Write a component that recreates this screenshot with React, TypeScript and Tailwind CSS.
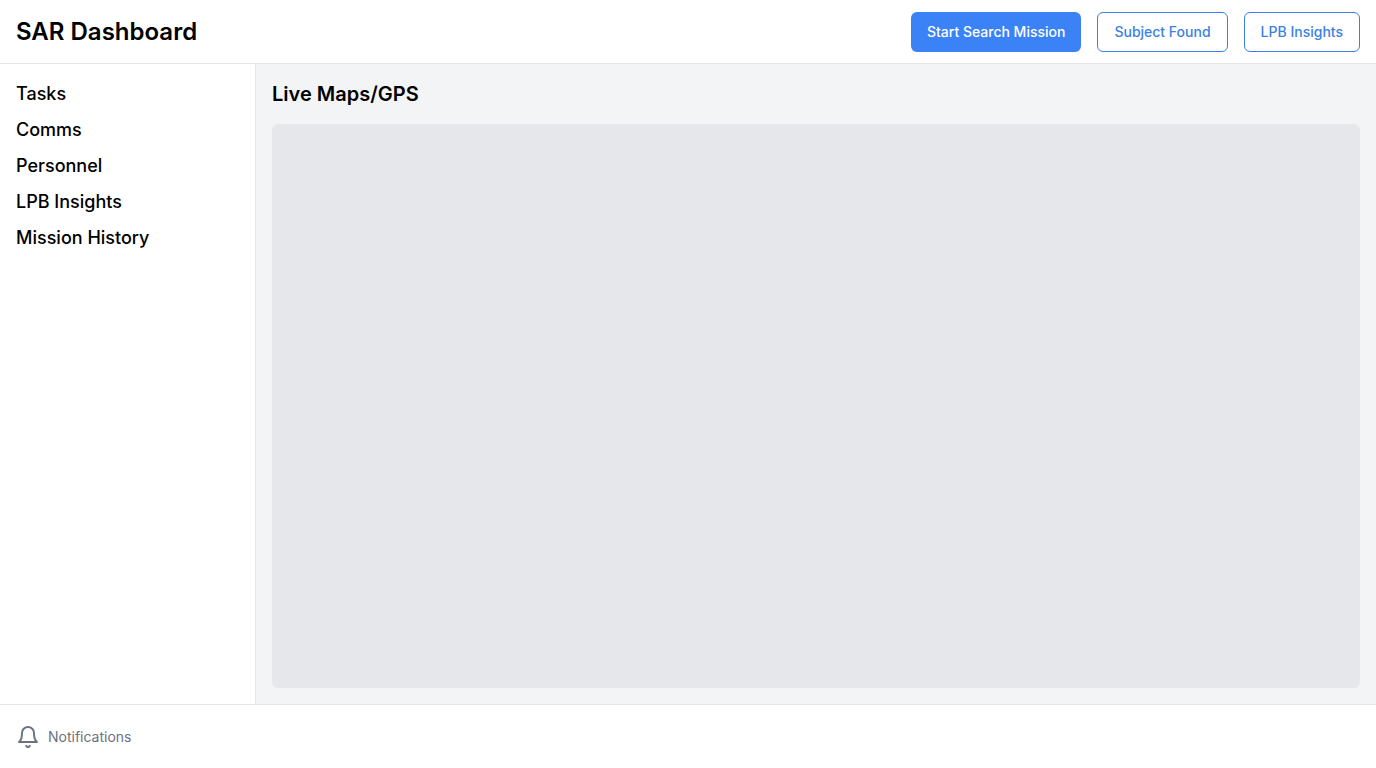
import React from "react";

const navItems = ["Tasks", "Comms", "Personnel", "LPB Insights", "Mission History"];

const buttonBase =
  "inline-flex h-10 items-center justify-center rounded-md px-4 text-sm font-medium whitespace-nowrap";
const primary = "bg-[#3b82f6] text-white";
const outline = "border border-[#3b7fe4] bg-white text-[#3b7fe4]";

function BellIcon() {
  return (
    <svg
      aria-hidden="true"
      className="size-6"
      viewBox="0 0 24 24"
      fill="none"
      stroke="currentColor"
      strokeWidth="2"
      strokeLinecap="round"
      strokeLinejoin="round"
    >
      <path d="M6 8a6 6 0 0 1 12 0c0 7 3 9 3 9H3s3-2 3-9" />
      <path d="M10.3 21a1.94 1.94 0 0 0 3.4 0" />
    </svg>
  );
}

export default function App() {
  return (
    <div className="flex h-screen flex-col bg-white font-['Inter',sans-serif] text-black">
      <header className="flex h-16 shrink-0 items-center justify-between border-b border-[#e5e7eb] px-4">
        <h1 className="text-2xl font-semibold">SAR Dashboard</h1>
        <div className="flex gap-4">
          <button type="button" className={`${buttonBase} ${primary}`}>Start Search Mission</button>
          <button type="button" className={`${buttonBase} ${outline}`}>Subject Found</button>
          <button type="button" className={`${buttonBase} ${outline}`}>LPB Insights</button>
        </div>
      </header>
      <div className="flex min-h-0 flex-1">
        <aside className="w-64 shrink-0 border-r border-[#e5e7eb] p-4">
          <nav>
            <ul className="flex flex-col gap-2">
              {navItems.map((item) => (
                <li key={item}>
                  <a href="#" className="block text-lg font-medium">{item}</a>
                </li>
              ))}
            </ul>
          </nav>
        </aside>
        <main className="flex min-w-0 flex-1 flex-col gap-4 bg-[#f3f4f6] p-4">
          <h2 className="text-xl font-semibold">Live Maps/GPS</h2>
          <section aria-label="Map" className="flex-1 rounded-md bg-[#e5e7eb]" />
        </main>
      </div>
      <footer className="flex h-16 shrink-0 items-center gap-2 border-t border-[#e5e7eb] px-4 text-[#6b7280]">
        <BellIcon />
        <span className="text-sm">Notifications</span>
      </footer>
    </div>
  );
}
